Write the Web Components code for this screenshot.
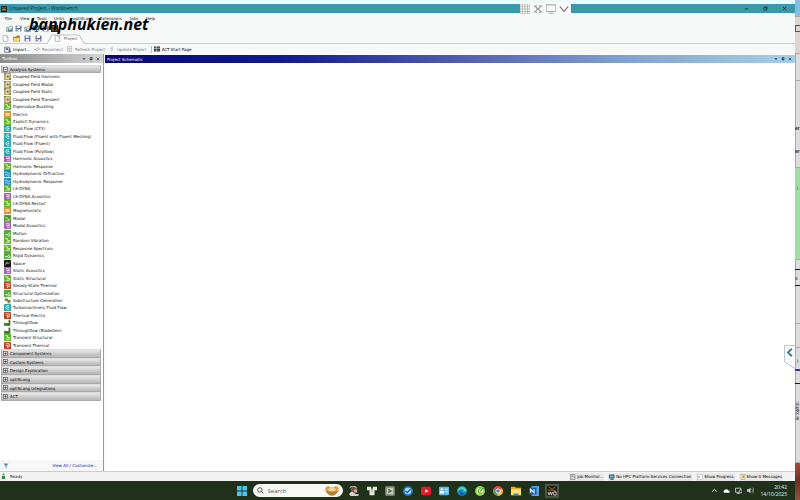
<!DOCTYPE html>
<html lang="en">
<head>
<meta charset="utf-8">
<title>Unsaved Project - Workbench</title>
<style>
html,body{height:100%;margin:0}
body{display:flex;overflow:hidden;background:#f7f8f8;color:#111;font:4px/7px "DejaVu Sans",sans-serif}
wb-window{flex:1;min-width:0}
</style>
</head>
<body>
<wb-window></wb-window>
<behind-strip></behind-strip>
<script>
const BASE = `*{box-sizing:border-box}button,input,a{font:inherit;color:inherit;margin:0;padding:0;border:0;background:none;text-decoration:none;white-space:nowrap}button{display:flex;align-items:center;gap:2px}svg{display:block}`;
function define(name, css, html){
  customElements.define(name, class extends HTMLElement{
    constructor(){super();this.attachShadow({mode:'open'}).innerHTML=`<style>${BASE}${css}</style>${typeof html==='function'?html(this):html}`;}
  });
}
const tile=(bg,ink,d)=>`<rect width="12" height="12" rx="1" fill="${bg}"/><path d="${d}" fill="none" stroke="${ink}" stroke-width="1.5"/>`;
const ART={
 coupled:'<rect width="12" height="12" rx="1" fill="#b3a873"/><path d="M3 2h6v3H3zM3 7h6v3H3z" fill="#f6efcd"/><path d="M0 0h3v3H0zM9 9h3v3H9zM5 4h3v4H5z" fill="#837a48"/>',
 green:tile('#66b32e','#e4f8d0','M2 3h4v3h4M3 9h6V6'),
 motion:tile('#57a83c','#fff','M2 8h4l4-4M6 10h4V7'),
 modal:tile('#4f9a2c','#cdeeb4','M2 6q2-5 4 0t4 0M2 10h8'),
 electric:tile('#cf9136','#fff0bc','M3 4h6v4H3zM5 6h3'),
 cfd:tile('#28a8ae','#e0ffff','M9 3H5L3 6l2 3h4M6 6h3'),
 hydro:tile('#268fb5','#d8f6ff','M2 5q2-3 4 0t4 0M2 9q2-3 4 0t4 0'),
 purple:tile('#a065ac','#fbe5ff','M3 3h6v3H4M5 9h5'),
 space:tile('#181818','#8d9270','M2 9l3-6 2 4 3-4M3 6h6'),
 thermal:tile('#b64a2e','#ffe3cf','M3 3h6v5H6v2M4 6h3'),
 sub:'<path d="M1 2h5v5H1zM6 5h5v6H6z" fill="#9aa05a"/><path d="M3 5h4v3M8 7h3" stroke="#4c5130" stroke-width="1.5" fill="none"/>',
 through:'<path d="M0 7v5h11V1H8v6H3V6" fill="#4d9c3d"/><path d="M2 9h7V2" stroke="#285c26" stroke-width="1.5" fill="none"/>',
 plus:'<rect x="1" y="1" width="10" height="10" fill="#eee" stroke="#444" stroke-width="1.5"/><path d="M3 6h6M6 3v6" stroke="#222" stroke-width="1.5"/>',
 minus:'<rect x="1" y="1" width="10" height="10" fill="#eee" stroke="#444" stroke-width="1.5"/><path d="M3 6h6" stroke="#222" stroke-width="1.5"/>',
 logo:'<rect width="12" height="12" fill="#251f17"/><path d="M2 2l4 3 4-3M2 7h8M3 10l3-3 3 3" stroke="#d7993b" stroke-width="1.5" fill="none"/>',
 project:'<path d="M1 4h4l1-2h5v9H1z" fill="#dfe7d5" stroke="#788a75"/><path d="M3 6h8v5H3z" fill="#4887a6"/><path d="M5 6h4v2H5z" fill="#fff"/>',
 page:'<path d="M2 1h6l2 3v7H2z" fill="#fff" stroke="#8a929b"/><path d="M8 1v3h3" stroke="#8a929b" fill="none"/>',
 folder:'<path d="M0 3h5l1-2h6v10H0z" fill="#b88b2c"/><path d="M2 5h10l-2 6H0z" fill="#f5d778"/>',
 save:'<path d="M1 1h10v10H1z" fill="#5d67ad"/><path d="M3 1h6v4H3zM3 7h6v4H3z" fill="#f5f6ff"/><path d="M7 1v3" stroke="#4a538f"/>',
 saveas:'<path d="M1 1h10v10H1z" fill="#66709a"/><path d="M3 1h6v4H3zM3 7h6v4H3z" fill="#fff"/><path d="M4 10l7-7" stroke="#555" stroke-width="1.5"/>',
 import:'<path d="M1 2h8v9H1z" fill="#eee" stroke="#444"/><path d="M3 4h4M3 6h4M10 3v7M8 8l2 3 2-3" stroke="#35539a" stroke-width="1.5" fill="none"/>',
 plug:'<path d="M0 7h4l2-3h3M5 9h3l2-3h2" fill="none" stroke="#9a9a9a" stroke-width="1.5"/>',
 refresh:'<path d="M1 1h8v10H1z" fill="#fff" stroke="#999"/><path d="M3 5q3-3 4 1M7 7q-3 3-4 0" fill="none" stroke="#888" stroke-width="1.5"/>',
 bolt:'<path d="M8 1L3 6h5l-4 5" fill="none" stroke="#aaa" stroke-width="1.5"/>',
 grid:'<path d="M0 1h5v4H0zM6 1h6v4H6zM0 6h5v5H0zM6 6h6v5H6z" fill="#34343e"/><path d="M1 3h10M1 9h10" stroke="#8b8ba0"/>',
 down:'<path d="M2 4h8L6 9z" fill="currentColor"/>', pin:'<path d="M4 1h5v6H4zM2 7h8M6 7v4" fill="none" stroke="currentColor" stroke-width="2"/>',
 close:'<path d="M2 2l8 8M10 2l-8 8" stroke="currentColor" stroke-width="2"/>', min:'<path d="M2 7h8" stroke="currentColor" stroke-width="2"/>',
 restore:'<path d="M2 4h6v6H2zM4 4V2h6v6H8" fill="none" stroke="currentColor" stroke-width="1.5"/>',
 filter:'<path d="M1 1h10L7 6v5L5 9V6z" fill="#4b91ad"/>',
 ready:'<circle cx="5" cy="3" r="2" fill="#268c38"/><path d="M2 6h6v5H2z" fill="#268c38"/><path d="M1 11h8" stroke="#114c20"/>',
 job:'<path d="M1 1h9v10H1z" fill="#eee" stroke="#555"/><path d="M3 3h3v2H3M7 7h2M3 8h3M7 4l3 4" stroke="#496278" fill="none"/>',
 monitor:'<rect y="1" width="11" height="8" rx="1" fill="#205f82"/><path d="M2 3h7v4H2z" fill="#68bdd0"/><path d="M3 11h6M6 9v2" stroke="#24465d" stroke-width="1.5"/>',
 progress:'<path d="M1 1h10v10H1z" fill="#fff" stroke="#aaa"/><path d="M2 6h4" stroke="#48a070" stroke-width="2"/>',
 messages:'<path d="M2 1h8v10H2z" fill="#fff4be" stroke="#989070"/><path d="M4 4h4v2H6v3" fill="none" stroke="#b47020" stroke-width="1.5"/>',
 win:'<path d="M0 0h5.5v5.5H0zM6.5 0H12v5.5H6.5zM0 6.5h5.5V12H0zM6.5 6.5H12V12H6.5z" fill="#4cc5f3"/>',
 search:'<circle cx="5" cy="5" r="3.8" fill="none" stroke="#333" stroke-width="1.4"/><path d="M8 8l3 3" stroke="#333" stroke-width="1.6"/>',
 chest:'<path d="M0 4q2-4 5-1h2q3-3 5 1L9 7H3z" fill="#d99e43"/><path d="M0 5q6 4 12 0-2 5-6 5T0 5z" fill="#b77a32"/><path d="M3 4q3-3 6 0v2H3z" fill="#ecd39a"/>',
 person:'<circle cx="6" cy="4" r="4" fill="#735749"/><path d="M0 10q2-5 6-2t6 1l-1 3H2z" fill="#d3d0d0"/><circle cx="8" cy="6" r="2" fill="#dca892"/><path d="M1 2q4-4 8 0" stroke="#fff" fill="none"/>',
 people:'<path d="M0 1h5v4H0zM7 1h5v4H7zM3 4h6v7H3z" fill="#e6e5dd"/><path d="M5 3h2M6 3v4" stroke="#999"/>',
 play:'<rect width="12" height="12" rx="2" fill="#777e70"/><path d="M2 2h8v8H2z" fill="#c9d1b9"/><path d="M4 3l5 3-5 3z" fill="#5e7054"/>',
 check:'<circle cx="6" cy="6" r="6" fill="#217ac0"/><circle cx="6" cy="6" r="4" fill="#a7d8f5"/><path d="M3 6l2 2 4-4" fill="none" stroke="#17619e" stroke-width="1.6"/>',
 youtube:'<rect y="1" width="12" height="10" rx="2" fill="#e71927"/><path d="M5 4l4 2-4 2z" fill="#fff"/>',
 card:'<rect y="1" width="12" height="10" rx="1" fill="#62b6df"/><path d="M2 3h3v2H2zM1 6h5v3H1z" fill="#f1fbff"/><path d="M7 4h4M7 7h4" stroke="#e7faff"/>',
 edge:'<circle cx="6" cy="6" r="6" fill="#1685c6"/><path d="M1 4q5-6 10 0 1 3-4 3 2-3-1-3-4 0-5 4z" fill="#52d6b1"/><path d="M5 5q0 5 6 4-4 4-8 1z" fill="#125b9c"/>',
 coc:'<circle cx="6" cy="6" r="6" fill="#8fcf46"/><circle cx="6" cy="6" r="4" fill="#e7ffd2"/><path d="M9 4Q4 2 4 6t5 2M6 7l5-6" fill="none" stroke="#5ba432" stroke-width="1.4"/>',
 chrome:'<circle cx="6" cy="6" r="6" fill="#e64a38"/><path d="M1 3l4 8Q0 11 0 6z" fill="#45a657"/><path d="M6 6l5-3q3 8-6 9z" fill="#f6c435"/><circle cx="6" cy="6" r="3" fill="#fff"/><circle cx="6" cy="6" r="2.2" fill="#4688dc"/>',
 files:'<path d="M0 1h5l1 1h6v9H0z" fill="#e6ac29"/><path d="M0 4h12v7H0z" fill="#ffe27a"/><path d="M3 9h6v2H3z" fill="#4285b8"/>',
 word:'<path d="M3 0h9v12H3z" fill="#55a4e0"/><path d="M0 2h9v8H0z" fill="#175baf"/><path d="M2 8V4l4 4V4" fill="none" stroke="#fff" stroke-width="1.3"/>',
 wb:'<rect width="12" height="12" fill="#17130e"/><path d="M2 1l4 3 4-3M1 5h10" stroke="#c58230" fill="none"/><path d="M1 7l1.5 4 1.5-4 1.5 4 1-4M8 7h3v4H8z" stroke="#eee" fill="none"/>',
 up:'<path d="M2 8l4-4 4 4" fill="none" stroke="#eee" stroke-width="1.6"/>',
 cloud:'<path d="M2 10a3 3 0 0 1 1-5 3.5 3.5 0 0 1 6 1 2 2 0 0 1 1 4z" fill="#fff"/>',
 net:'<path d="M1 2h9v7H1zM3 11h5" fill="none" stroke="#eee" stroke-width="1.3"/><path d="M8 5h4v5H8z" fill="#1f3119" stroke="#eee"/>',
 sound:'<path d="M0 4h3l3-3v10L3 8H0z" fill="#ccc"/><path d="M8 3q3 3 0 6M10 1q4 5 0 10" fill="none" stroke="#ccc"/>',
 keypad:'<path d="M0 0h12v12H0zM3 0v12M6 0v12M9 0v12M0 3h12M0 6h12M0 9h12" fill="none" stroke="#b9b4b4"/>',
 expand:'<path d="M1 2l4 3v2l-4 3M11 2L7 5v2l4 3M3 2h2M7 2h2M3 10h2M7 10h2M4 6h4" fill="none" stroke="#929292" stroke-width="1.3"/>',
 screen:'<path d="M0 1h12v8H0zM3 11h6" fill="none" stroke="#aaa" stroke-width="1.3"/>',
 chevron:'<path d="M1 3l5 6 5-6" fill="none" stroke="#888" stroke-width="1.5"/>',
 left:'<path d="M9 1L4 6l5 5" fill="none" stroke="#347e99" stroke-width="2.5"/>'
};
define('ui-icon',`:host{display:block;flex:none;width:var(--size,6px);height:var(--size,6px)}svg{width:100%;height:100%}`,
 el=>`<svg viewBox="0 0 12 12" aria-hidden="true">${ART[el.getAttribute('name')]||''}</svg>`);
define('title-bar',`:host{display:flex;align-items:center;height:9px;margin-top:4px;background:#3b98aa;color:#102b40;padding:0 8px 0 1px;gap:2px;font-size:5px;font-family:"Open Sans",sans-serif}span{flex:1}nav{display:flex;gap:14px}`,
 `<ui-icon name="logo"></ui-icon><span>Unsaved Project - Workbench</span><nav>${['min','restore','close'].map(n=>`<button aria-label="${n}"><ui-icon name="${n}" style="--size:5px"></ui-icon></button>`).join('')}</nav>`);
define('menu-bar',`:host{display:grid;grid-template-columns:15px 17px 17px 19px 27px 30px 16px auto;justify-content:start;align-items:center;height:10px;padding-left:5px}`,
 ['File','View','Tools','Units','optiSLang','Extensions','Jobs','Help'].map(t=>`<button>${t}</button>`).join(''));
define('tool-strip',`:host{display:flex;align-items:center;height:11px;padding-left:6px;gap:2px;--size:7px}`,
 ['project','saveas','project','monitor','save','logo'].map((n,i)=>`<button aria-label="Tool ${i+1}"><ui-icon name="${n}"></ui-icon></button>`).join(''));
define('tab-strip',`:host{display:flex;align-items:center;height:10px;padding-left:2px;gap:4px;border-bottom:1px solid #ccc;--size:7px}.tab{position:relative;height:10px;margin-left:1px;padding:0 7px;gap:3px;color:#555}.tab svg{position:absolute;inset:0;width:100%;height:100%}.tab ui-icon,.tab span{position:relative}`,
 ['page','folder','save','saveas'].map((n,i)=>`<button aria-label="${['New','Open','Save','Save as'][i]}"><ui-icon name="${n}"></ui-icon></button>`).join('')+`<button class="tab"><svg viewBox="0 0 40 10" preserveAspectRatio="none" aria-hidden="true"><path d="M0 10L5 1h29l6 9" fill="#fff" stroke="#bbb"/></svg><ui-icon name="page"></ui-icon><span>Project</span></button>`);
define('action-strip',`:host{display:flex;align-items:center;height:10px;padding-left:4px;gap:4px}button{color:#777;gap:2px}.on{color:#000}.last{border-left:1px solid #bbb;padding-left:2px}`,
 `<button class="on"><ui-icon name="import" style="--size:7px"></ui-icon>Import...</button><button><ui-icon name="plug"></ui-icon>Reconnect</button><button><ui-icon name="refresh"></ui-icon>Refresh Project</button><button><ui-icon name="bolt"></ui-icon>Update Project</button><button class="on last"><ui-icon name="grid"></ui-icon>ACT Start Page</button>`);
define('pane-header',`:host{display:flex;align-items:center;height:9px;padding:0 3px 0 2px}slot{display:block;flex:1}nav{display:flex;gap:3px;color:#172a3c}`,
 `<slot></slot><nav>${['down','pin','close'].map(n=>`<button aria-label="${n}"><ui-icon name="${n}" style="--size:4px"></ui-icon></button>`).join('')}</nav>`);
define('group-header',`:host{display:block;min-height:0}button{width:100%;height:100%;border:1px solid #aaa;border-top-color:#ddd;background:linear-gradient(#e8e8e8,#b6b6b6);padding-left:1px;gap:2px;color:#000}`,
 el=>`<button><ui-icon name="${el.hasAttribute('open')?'minus':'plus'}" style="--size:5px"></ui-icon><slot></slot></button>`);
define('system-item',`:host{display:block;min-height:0}button{height:100%;gap:2px}`,
 el=>`<button><ui-icon name="${el.getAttribute('kind')}" style="--size:7px"></ui-icon><slot></slot></button>`);
const SYSTEMS=[['coupled','Coupled Field Harmonic'],['coupled','Coupled Field Modal'],['coupled','Coupled Field Static'],['coupled','Coupled Field Transient'],['green','Eigenvalue Buckling'],['electric','Electric'],['green','Explicit Dynamics'],['cfd','Fluid Flow (CFX)'],['cfd','Fluid Flow (Fluent with Fluent Meshing)'],['cfd','Fluid Flow (Fluent)'],['cfd','Fluid Flow (Polyflow)'],['purple','Harmonic Acoustics'],['green','Harmonic Response'],['hydro','Hydrodynamic Diffraction'],['hydro','Hydrodynamic Response'],['green','LS-DYNA'],['purple','LS-DYNA Acoustics'],['green','LS-DYNA Restart'],['electric','Magnetostatic'],['modal','Modal'],['purple','Modal Acoustics'],['motion','Motion'],['green','Random Vibration'],['green','Response Spectrum'],['motion','Rigid Dynamics'],['space','Space'],['purple','Static Acoustics'],['green','Static Structural'],['thermal','Steady-State Thermal'],['motion','Structural Optimization'],['sub','Substructure Generation'],['cfd','Turbomachinery Fluid Flow'],['thermal','Thermal-Electric'],['through','Throughflow'],['through','Throughflow (BladeGen)'],['green','Transient Structural'],['thermal','Transient Thermal']];
define('toolbox-pane',`:host{display:flex;flex-direction:column;width:104px;background:#fff;border-right:1px solid #999}pane-header{background:linear-gradient(90deg,#8c8c8c,#d4d4d4);color:#fff}.open{height:8px;margin:2px 2px 0 1px}.list{display:grid;grid-auto-rows:1fr;height:276px;padding-left:4px}.groups{display:grid;grid-auto-rows:1fr;height:52px;margin:0 2px 0 1px}footer{display:flex;align-items:center;justify-content:space-between;margin-top:auto;height:11px;padding:0 6px 0 3px;background:#f7f7fa;color:#2222a0}`,
 `<pane-header>Toolbox</pane-header><group-header open class="open">Analysis Systems</group-header><div class="list">${SYSTEMS.map(([k,t])=>`<system-item kind="${k}">${t}</system-item>`).join('')}</div><div class="groups">${['Component Systems','Custom Systems','Design Exploration','optiSLang','optiSLang Integrations','ACT'].map(t=>`<group-header>${t}</group-header>`).join('')}</div><footer><ui-icon name="filter"></ui-icon><span><a href="#all">View All</a> / <a href="#customize">Customize...</a></span></footer>`);
define('schematic-pane',`:host{display:block;background:#fff;margin-left:1px;flex:1;min-width:0}pane-header{height:8px;margin-top:1px;background:linear-gradient(90deg,#080878,#101890 25%,#5868b4 55%,#7fa2d0 75%,#a5d0e8);color:#fff}`,`<pane-header>Project Schematic</pane-header>`);
define('status-bar',`:host{display:flex;align-items:center;height:10px;background:#f3f3f3;border-top:1px solid #ccc;padding:0 12px 0 1px;gap:4px}.r{margin-right:auto;display:flex;gap:3px}button{height:8px;background:#e7e7e7;gap:1px;padding:0 1px;color:#000}`,
 `<span class="r"><ui-icon name="ready"></ui-icon>Ready</span><button><ui-icon name="job"></ui-icon>Job Monitor...</button><button><ui-icon name="monitor"></ui-icon>No HPC Platform Services Connection</button><button><ui-icon name="progress"></ui-icon>Show Progress</button><button><ui-icon name="messages"></ui-icon>Show 0 Messages</button>`);
define('task-bar',`:host{display:grid;grid-template-columns:1fr auto 1fr;align-items:center;height:19px;background:#1f3119;color:#eee}.apps{grid-column:2;display:flex;align-items:center;gap:8px;padding-right:2px;--size:10px}.tray{justify-self:end;display:flex;align-items:center;gap:5px;padding-right:8px;--size:7px}time{text-align:right;line-height:7px;padding-left:1px;font-size:5px;font-family:"Open Sans",sans-serif}label{display:flex;align-items:center;width:90px;height:13px;margin-left:-2px;margin-right:-2px;border-radius:7px;background:#f8f9f6;padding:0 4px;gap:4px}input{flex:1;min-width:0;font:6px "Open Sans",sans-serif;outline:0}input::placeholder{color:#555;opacity:1}.active{background:#4b5746;padding:2px;margin:-2px}`,
 `<div class="apps"><button aria-label="Start"><ui-icon name="win"></ui-icon></button><label><ui-icon name="search" style="--size:7px"></ui-icon><input aria-label="Search" placeholder="Search"><ui-icon name="chest" style="--size:14px"></ui-icon></label>${['person','people','play','check','youtube','card','edge','coc','chrome','files','word','wb'].map(n=>`<button class="${n==='wb'?'active':''}" aria-label="${n}"><ui-icon name="${n}"></ui-icon></button>`).join('')}</div><div class="tray"><ui-icon name="up"></ui-icon><ui-icon name="cloud"></ui-icon><ui-icon name="net"></ui-icon><ui-icon name="sound"></ui-icon><time>20:42<br>14/10/2025</time></div>`);
define('capture-bar',`:host{position:absolute;left:520px;top:2px;display:flex;align-items:center;gap:3px;height:14px;padding-right:2px;background:#f8f9f9;--size:10px}`,
 ['keypad','expand','screen','chevron'].map(n=>`<button aria-label="${n}"><ui-icon name="${n}"></ui-icon></button>`).join(''));
define('side-handle',`:host{position:absolute;right:0;top:345px;width:11px}button{width:100%;position:relative;height:24px;align-items:flex-start;padding:3px 0 0 1px}svg{position:absolute;inset:0;width:100%;height:100%}ui-icon{position:relative}`,`<button aria-label="Show side panel"><svg viewBox="0 0 11 24" aria-hidden="true"><path d="M11 .5H.5V17l10.5 6.5" fill="#f8fafa" stroke="#b9c8cc"/></svg><ui-icon name="left" style="--size:9px"></ui-icon></button>`);
define('water-mark',`:host{position:absolute;left:29px;top:14px;font:italic bold 16px/20px "Open Sans",sans-serif;color:#050505}`,`<slot></slot>`);
define('wb-window',`:host{display:flex;flex-direction:column;position:relative;background:linear-gradient(#e8fbfa 4px,#f7f8f8 4px)}main{display:flex;flex:1;min-height:0}`,
 `<title-bar></title-bar><menu-bar></menu-bar><tool-strip></tool-strip><tab-strip></tab-strip><action-strip></action-strip><main><toolbox-pane></toolbox-pane><schematic-pane></schematic-pane></main><status-bar></status-bar><task-bar></task-bar><capture-bar></capture-bar><side-handle></side-handle><water-mark>banphukien.net</water-mark>`);
define('behind-strip',`:host{display:grid;grid-template-rows:17px 37px 27px 87px 92px 10px 16px 38px 24px 23px 13px 54px 25px 1fr;width:5px;overflow:hidden;box-shadow:inset 1px 0 #aaa;background:#dcdcde;color:#222;font-family:"Liberation Sans",sans-serif;font-size:5px;line-height:8px}div{min-width:0;border-bottom:1px solid #aaa}.sky{background:#85bde9}.tile{background:#ddd6cf}i{display:block;height:7px;margin-top:8px;border:1px solid #555;border-right:0}.ems{font-weight:bold;padding-top:36px;line-height:23px}.green{background:#9ddf9d;padding:16px 0 0 2px;color:#176b28}.dark{border-color:#114}.blue{border-bottom:2px solid #33a;padding:9px 0 0 2px}.earth{background:linear-gradient(#a94c35,#6b3022 50%,#905440);border:0}.v{writing-mode:vertical-rl;transform:rotate(180deg);line-height:5px;border:0;text-align:center}.text{padding-top:4px}`,
 `<div class="sky"></div><div class="tile"><i></i></div><div></div><div class="ems">er<br>er</div><div class="green">i</div><div class="dark"></div><div class="dark text">s</div><div></div><div></div><div class="blue">i</div><div class="dark"></div><div class="v">le xamo:</div><div></div><div class="earth"></div>`);
</script>
</body>
</html>
